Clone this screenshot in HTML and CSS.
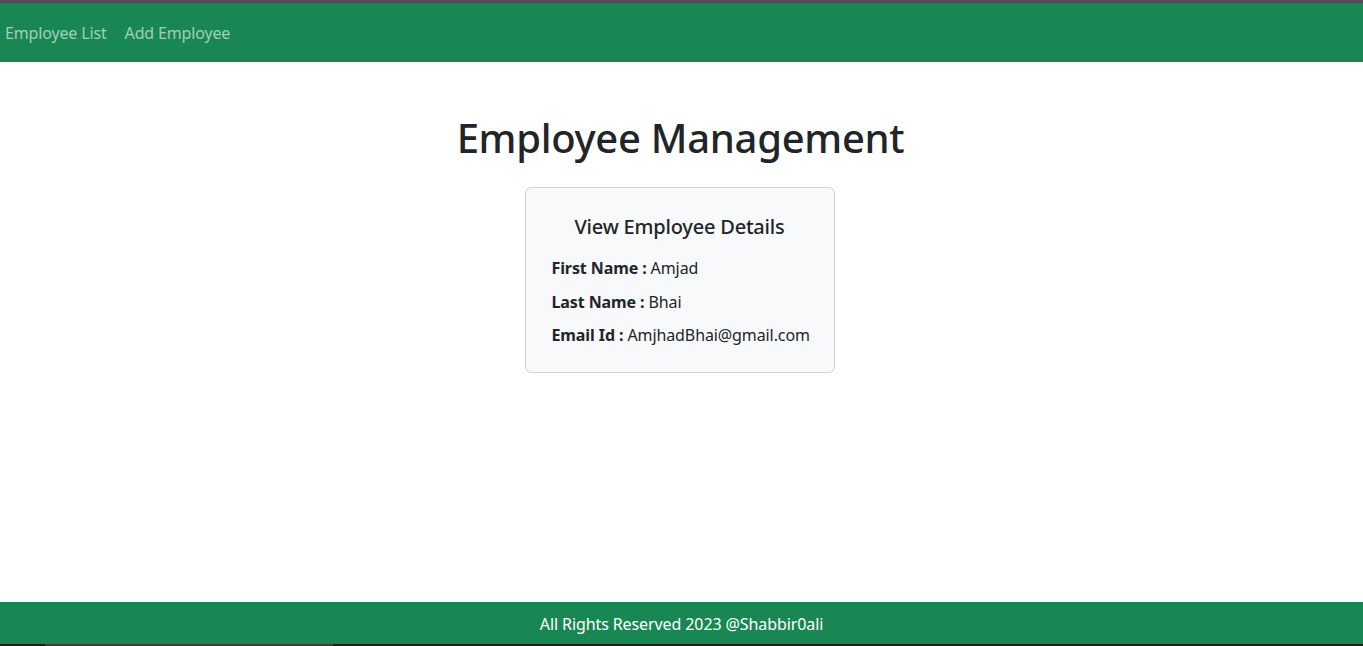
FILE: index.html
```html
<!DOCTYPE html>
<html lang="en">
<head>
<meta charset="utf-8">
<title>Employee Management</title>
<link rel="stylesheet" href="styles.css">
</head>
<body>
<div class="page">
  <header class="navbar">
    <nav class="nav">
      <a class="nav-link" href="#">Employee List</a>
      <a class="nav-link" href="#">Add Employee</a>
    </nav>
  </header>
  <main class="main">
    <h1 class="title">Employee Management</h1>
    <section class="card">
      <h2 class="card-title">View Employee Details</h2>
      <div class="row"><span class="label">First Name :</span> Amjad</div>
      <div class="row"><span class="label">Last Name :</span> Bhai</div>
      <div class="row"><span class="label">Email Id :</span> AmjhadBhai@gmail.com</div>
    </section>
  </main>
  <footer class="footer">All Rights Reserved 2023 @Shabbir0ali</footer>
  <div class="bottom-strip"><div class="strip-seg"></div></div>
</div>
</body>
</html>
```
FILE: styles.css
```css
* { box-sizing: border-box; }
html, body { margin: 0; padding: 0; height: 100%; }
body {
  font-family: "Noto Sans", "Open Sans", sans-serif;
  color: #212529;
  background: #fff;
}
.page {
  display: flex;
  flex-direction: column;
  height: 646px;
  border-top: 3px solid #4f4f5a;
}
.navbar {
  background: #198754;
  height: 59px;
  display: flex;
  align-items: center;
  flex-shrink: 0;
}
.nav {
  display: flex;
  gap: 18px;
  padding-left: 5px;
}
.nav-link {
  color: rgba(255, 255, 255, 0.6);
  text-decoration: none;
  font-size: 16px;
  letter-spacing: -0.15px;
  line-height: 24px;
}
.main {
  flex: 1;
  display: flex;
  flex-direction: column;
  align-items: center;
}
.title {
  margin: 50px 2px 0 0;
  font-size: 40px;
  font-weight: 500;
  line-height: 52px;
  letter-spacing: -0.3px;
}
.card {
  margin: 23px 4px 0 0;
  width: 310px;
  background: #f8f9fa;
  border: 1px solid #cfd1d3;
  border-radius: 6px;
  padding: 22px 26px 25px 26px;
}
.card-title {
  margin: 0 0 12px;
  text-align: center;
  font-size: 20px;
  font-weight: 500;
  line-height: 34px;
  letter-spacing: -0.2px;
}
.row {
  font-size: 16px;
  line-height: 24px;
  margin-bottom: 9.5px;
  letter-spacing: -0.1px;
  white-space: nowrap;
}
.row:last-child { margin-bottom: 0; }
.label { font-weight: 700; }
.footer {
  background: #198754;
  color: #fff;
  height: 42px;
  flex-shrink: 0;
  display: flex;
  align-items: center;
  justify-content: center;
  font-size: 16px;
  letter-spacing: -0.1px;
  padding-top: 2px;
}
.bottom-strip {
  height: 2px;
  background: #1e1e1e;
  display: flex;
  flex-shrink: 0;
}
.strip-seg {
  margin-left: 45px;
  width: 288px;
  background: #3c3c3c;
}
```
